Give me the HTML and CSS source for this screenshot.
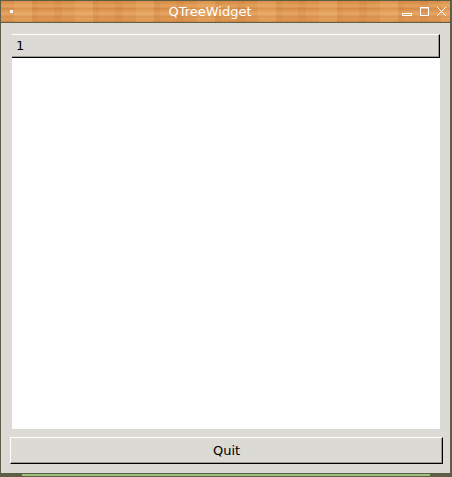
FILE: index.html
```html
<!DOCTYPE html>
<html lang="en">
<head>
    <meta charset="UTF-8">
    <title>QTreeWidget</title>
    <link rel="stylesheet" href="styles.css">
</head>
<body>
    <div class="window">
        <div class="titlebar">
            <div class="title-left"><span class="app-icon"></span></div>
            <div class="title">QTreeWidget</div>
            <svg class="title-buttons" width="50" height="21" viewBox="0 0 50 21">
                <rect x="2.5" y="12.5" width="9" height="2" fill="none" stroke="#fff"/>
                <rect x="20.5" y="6.5" width="8" height="8" fill="none" stroke="#fff"/>
                <line x1="20.5" y1="7" x2="28.5" y2="7" stroke="#fff"/>
                <path d="M37 6 L46 15 M46 6 L37 15" stroke="#fff" stroke-width="1"/>
            </svg>
        </div>
        <div class="client">
            <div class="tree">
                <div class="tree-header"><span>1</span></div>
                <div class="tree-body"></div>
            </div>
            <button class="quit">Quit</button>
        </div>
    </div>
    <div class="desktop"><div class="taskbar-line"></div></div>
</body>
</html>
```

FILE: styles.css
```css
* {
    margin: 0;
    padding: 0;
    box-sizing: border-box;
}

body {
    width: 452px;
    height: 477px;
    background: #5c5e45;
    font-family: 'DejaVu Sans', sans-serif;
    font-size: 13px;
    overflow: hidden;
}

.window {
    width: 452px;
    height: 473px;
    border-top: 1px solid #5c5e45;
    border-left: 1px solid #5c5e45;
    border-right: 2px solid #5c5e45;
    display: flex;
    flex-direction: column;
}

/* wood grain: horizontal bands with a few uneven streaks */
.titlebar {
    height: 22px;
    border-bottom: 1px solid #5c5e45;
    display: flex;
    align-items: center;
    color: #fff;
    background:
        repeating-linear-gradient(90deg, rgba(255,215,150,0) 0 13px, rgba(255,215,150,0.12) 13px 31px, rgba(160,85,25,0.08) 31px 37px, rgba(255,215,150,0) 37px 53px, rgba(170,90,30,0.1) 53px 61px),
        linear-gradient(180deg, #d48944 0%, #dc954f 12%, #e4a361 24%, #d68c46 36%, #e09b58 50%, #e7a767 62%, #d8904a 74%, #e09a56 86%, #d18641 100%);
}

.title-left {
    width: 19px;
    height: 21px;
    position: relative;
}

.app-icon {
    position: absolute;
    left: 9px;
    top: 9px;
    width: 3px;
    height: 3px;
    background: #fff;
}

.title {
    flex: 1;
    text-align: center;
    line-height: 21px;
}

.title-buttons {
    display: block;
}

.client {
    flex: 1;
    background: #dcdad5;
    padding: 11px 7px 9px 9px;
    display: flex;
    flex-direction: column;
    gap: 8px;
}

.tree {
    height: 395px;
    margin: 0 3px 0 2px;
    display: flex;
    flex-direction: column;
    background: #fff;
}

.tree-header {
    height: 24px;
    background: #dcdad5;
    border-top: 1px solid #fff;
    border-bottom: 1px solid #000;
    border-right: 1px solid #000;
    box-shadow: inset -1px -1px 0 #9e9a91;
    padding-left: 4px;
    line-height: 22px;
    color: #000;
}

.tree-body {
    flex: 1;
    background: #fff;
}

.quit {
    height: 27px;
    background: #dcdad5;
    border-top: 1px solid #fff;
    border-left: 1px solid #fff;
    border-bottom: 1px solid #000;
    border-right: 1px solid #000;
    box-shadow: inset -1px -1px 0 #9e9a91;
    font-family: 'DejaVu Sans', sans-serif;
    font-size: 13px;
    color: #000;
}

.desktop {
    height: 4px;
    padding: 1px 22px 1px 22px;
    width: 452px;
}

.taskbar-line {
    width: 408px;
    height: 2px;
    background: #9dc07a;
}
```
